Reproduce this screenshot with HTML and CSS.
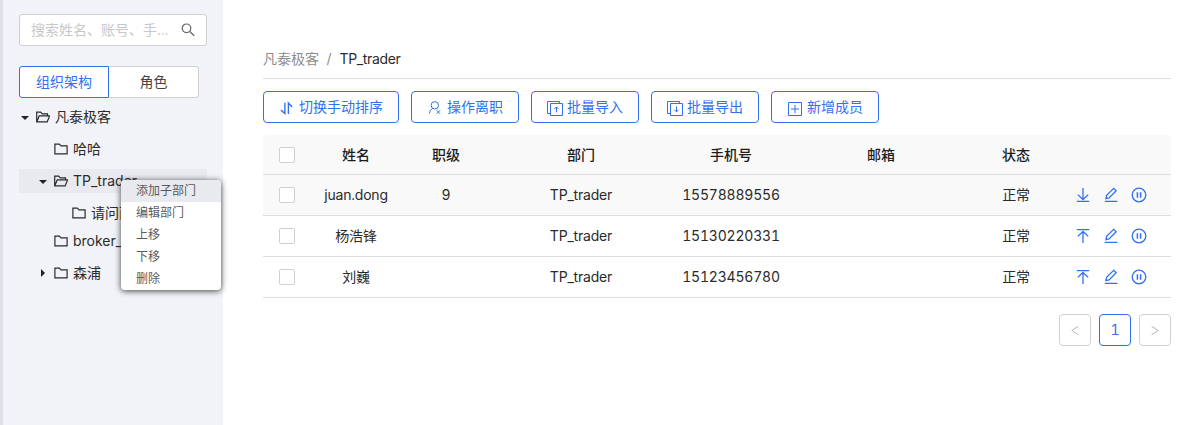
FILE: index.html
```
<!DOCTYPE html>
<html lang="zh-CN">
<head>
<meta charset="utf-8">
<title>组织架构</title>
<link rel="stylesheet" href="styles.css">
</head>
<body>
<svg class="defs" width="0" height="0">
  <symbol id="folder" viewBox="0 0 14 14"><path d="M.9 2.1h4.4l1.7 1.7h6.1v8.1H.9z"/></symbol>
  <symbol id="open" viewBox="0 0 14 14"><path d="M.7 11.9V2.1h3.9l1.7 1.7h5.2v2.1M.7 11.9l2.5-6h10.3l-2.3 6z"/></symbol>
  <symbol id="edit" viewBox="0 0 16 16"><path d="M1.8 14.4h12.6M3 11.6l.6-3.2 7.1-7.1 2.5 2.5-7.1 7.1z"/></symbol>
  <symbol id="pause" viewBox="0 0 16 16"><circle cx="8" cy="8" r="6.8"/><path class="thick" d="M6.4 5.2v5.6M9.6 5.2v5.6"/></symbol>
  <symbol id="up" viewBox="0 0 16 16"><path d="M1.8 1.6h12.4M8 15V3.6M2.8 8.4 8 3.5l5.2 4.9"/></symbol>
  <symbol id="down" viewBox="0 0 16 16"><path d="M1.8 14.4h12.4M8 1v11.5M2.8 7.6 8 12.5l5.2-4.9"/></symbol>
</svg>
<div class="app">
  <aside class="sidebar">
    <div class="search"><span>搜索姓名、账号、手...</span>
      <svg class="search-icon" viewBox="0 0 14 14"><circle cx="5.5" cy="5.3" r="4.3"/><path d="m8.7 8.5 4.5 4.3"/></svg>
    </div>
    <div class="tabs"><div class="tab active">组织架构</div><div class="tab">角色</div></div>
    <div class="tree">
      <div class="node"><i class="caret"></i><svg class="folder"><use href="#open"/></svg><span>凡泰极客</span></div>
      <div class="node level1"><i class="caret none"></i><svg class="folder"><use href="#folder"/></svg><span>哈哈</span></div>
      <div class="node level1 selected"><i class="caret"></i><svg class="folder"><use href="#open"/></svg><span>TP_trader</span></div>
      <div class="node level2"><i class="caret none"></i><svg class="folder"><use href="#folder"/></svg><span>请问西</span></div>
      <div class="node level1"><i class="caret none"></i><svg class="folder"><use href="#folder"/></svg><span>broker_</span></div>
      <div class="node level1"><i class="caret closed"></i><svg class="folder"><use href="#folder"/></svg><span>森浦</span></div>
    </div>
    <div class="menu">
      <div class="item hover">添加子部门</div>
      <div class="item">编辑部门</div>
      <div class="item">上移</div>
      <div class="item">下移</div>
      <div class="item">删除</div>
    </div>
  </aside>
  <main class="main">
    <div class="crumbs"><span class="parent">凡泰极客</span><span class="sep">/</span><span class="current-dept">TP_trader</span></div>
    <div class="toolbar">
      <div class="btn"><svg class="icon sort" viewBox="0 0 16 16"><path d="M5.9 2.7v10.8L2 10.1M9.4 14.1V3.1l3.7 3.9"/></svg>切换手动排序</div>
      <div class="btn"><svg class="icon" viewBox="0 0 16 16"><circle cx="7.8" cy="5.3" r="3.7"/><path d="M5.8 8.4C3.8 9.2 2.7 11 2.6 13.5M9.5 8.5l1 .6M9.6 10.3l3.5 3.5M13.1 10.3l-3.5 3.5"/></svg>操作离职</div>
      <div class="btn"><svg class="icon" viewBox="0 0 16 16"><path d="M12.5 3V1.5h-12v12H3M3.5 3.5h12v12h-12zM9.5 12.3V7M7.3 9.1l2.2-2.2 2.2 2.2"/></svg>批量导入</div>
      <div class="btn"><svg class="icon" viewBox="0 0 16 16"><path d="M12.5 3V1.5h-12v12H3M3.5 3.5h12v12h-12zM9.5 6.5v5.4M7.3 9.7l2.2 2.2 2.2-2.2"/></svg>批量导出</div>
      <div class="btn"><svg class="icon" viewBox="0 0 16 16"><path d="M1.5 2.5h13v13h-13zM8 5v8M4 9h8"/></svg>新增成员</div>
    </div>
    <div class="table">
      <div class="row head"><span><i class="check"></i></span><span>姓名</span><span>职级</span><span>部门</span><span>手机号</span><span>邮箱</span><span>状态</span><span></span></div>
      <div class="row hovered"><span><i class="check"></i></span><span>juan.dong</span><span>9</span><span>TP_trader</span><span>15578889556</span><span></span><span>正常</span><span class="actions"><svg><use href="#down"/></svg><svg><use href="#edit"/></svg><svg><use href="#pause"/></svg></span></div>
      <div class="row"><span><i class="check"></i></span><span>杨浩锋</span><span></span><span>TP_trader</span><span>15130220331</span><span></span><span>正常</span><span class="actions"><svg><use href="#up"/></svg><svg><use href="#edit"/></svg><svg><use href="#pause"/></svg></span></div>
      <div class="row"><span><i class="check"></i></span><span>刘巍</span><span></span><span>TP_trader</span><span>15123456780</span><span></span><span>正常</span><span class="actions"><svg><use href="#up"/></svg><svg><use href="#edit"/></svg><svg><use href="#pause"/></svg></span></div>
    </div>
    <div class="pager">
      <div class="page"><svg viewBox="0 0 12 12"><path d="M9.3 2.3 2.8 6.5l6.5 4.2"/></svg></div>
      <div class="page current">1</div>
      <div class="page"><svg viewBox="0 0 12 12"><path d="M2.7 2.3 9.2 6.5l-6.5 4.2"/></svg></div>
    </div>
  </main>
</div>
</body>
</html>
```
FILE: styles.css
```
* { box-sizing: border-box; }
body {
  margin: 0;
  background: #fff;
  color: #2b2b2b;
  font: 14px/22px Inter, "Noto Sans CJK SC", sans-serif;
  font-feature-settings: "tnum";
}
svg { fill: none; stroke: currentColor; flex: none; }
.defs { position: absolute; }
.app { display: flex; height: 425px; overflow: hidden; }
.sidebar {
  position: relative;
  width: 223px;
  flex: none;
  padding: 14px 16px 0;
  background: #f2f3f8;
  border-left: 3px solid #dfe0ea;
}
.search {
  display: flex;
  align-items: center;
  justify-content: space-between;
  height: 32px;
  padding: 0 11px;
  border: 1px solid #d0d0d0;
  border-radius: 3px;
  background: #fff;
  color: #c8c8c8;
}
.search-icon { width: 14px; height: 14px; color: #666; stroke-width: 1.2; }
.tabs { display: flex; width: 180px; height: 32px; margin-top: 20px; }
.tab {
  width: 90px;
  display: flex;
  align-items: center;
  justify-content: center;
  border: 1px solid #d0d0d0;
  border-left: 0;
  border-radius: 0 3px 3px 0;
  background: #fff;
  color: #444;
}
.tab.active { border: 1px solid #3370f0; border-radius: 3px 0 0 3px; color: #3370f0; }
.tree { padding-top: 7px; }
.node { display: flex; align-items: center; height: 24px; margin-bottom: 8px; }
.node.level1 { padding-left: 18px; }
.node.level2 { padding-left: 36px; margin-bottom: 4px; }
.node.selected { background: #e9eaf0; }
.folder { width: 14px; height: 14px; margin: 0 5px; stroke-width: 1.2; }
.caret {
  width: 8px;
  margin: 1px 2px 0;
  border: 4px solid transparent;
  border-top: 4px solid #222;
  border-bottom: 0;
}
.caret.closed {
  width: 4px;
  height: 8px;
  margin: 0 4px;
  border: 4px solid transparent;
  border-left: 4px solid #222;
  border-right: 0;
}
.caret.none { border-color: transparent; }
.menu {
  position: absolute;
  left: 118px;
  top: 180px;
  width: 100px;
  border-radius: 4px;
  background: #fff;
  box-shadow: 0 1px 6px rgba(0, 0, 0, .75);
  color: #5a5a5a;
  font-size: 12px;
}
.item { height: 22px; padding-left: 15px; }
.item.hover { background: #e9eaf0; border-radius: 4px 4px 0 0; }
.main { flex: 1; padding: 48px 23px 0 40px; }
.crumbs { display: flex; height: 31px; border-bottom: 1px solid #dedede; }
.crumbs .parent { color: #8c8c8c; }
.crumbs .sep { margin: 0 8px 0 7.5px; color: #8c8c8c; }
.current-dept { letter-spacing: -.35px; }
.toolbar { display: flex; gap: 12px; margin-top: 12px; }
.btn {
  display: flex;
  align-items: center;
  gap: 4px;
  height: 32px;
  padding: 0 15px;
  border: 1px solid #3370f0;
  border-radius: 4px;
  color: #3370f0;
}
.icon { width: 16px; height: 16px; stroke-width: 1; margin-top: 2px; }
.icon.sort { stroke-width: 1.4; }
.table { margin-top: 12px; }
.row {
  display: grid;
  grid-template-columns: 48px 90px 90px 180px 120px 180px 90px 110px;
  align-items: center;
  height: 41px;
  border-bottom: 1px solid #dedede;
  text-align: center;
  letter-spacing: -.2px;
}
.row.head { height: 40px; background: #f9f9f9; border-radius: 4px 4px 0 0; font-weight: 500; color: #1c1c1c; letter-spacing: 0; }
.row.hovered { background: #f9f9f9; }
.check {
  display: block;
  width: 16px;
  height: 16px;
  margin: 0 auto;
  border: 1px solid #d0d0d0;
  border-radius: 2px;
  background: #fff;
}
.actions { display: flex; gap: 12px; padding-left: 14px; color: #3370f0; }
.actions svg { width: 16px; height: 16px; stroke-width: 1.3; }
.thick { stroke-width: 1.5; }
.pager { display: flex; justify-content: flex-end; gap: 8px; margin-top: 16px; }
.page {
  display: flex;
  align-items: center;
  justify-content: center;
  width: 32px;
  height: 32px;
  border: 1px solid #d0d0d0;
  border-radius: 4px;
  color: #b4b4b4;
}
.page svg { width: 12px; height: 12px; }
.page.current { border-color: #3370f0; color: #3370f0; }
```
